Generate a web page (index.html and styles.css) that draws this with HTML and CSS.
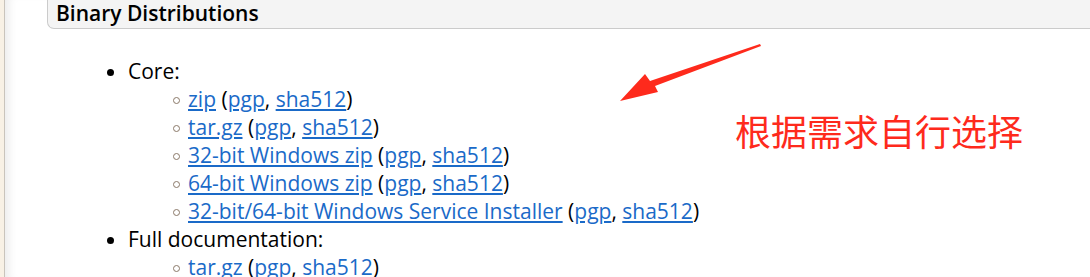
FILE: index.html
```html
<!DOCTYPE html>
<html lang="zh-CN">
  <head>
    <meta charset="UTF-8" />
    <title>Binary Distributions</title>
    <link rel="stylesheet" href="styles.css">
  </head>
  <body>
    <div class="page">
      <div class="side"></div>
      <div class="main">
        <h3 class="section-title">Binary Distributions</h3>
        <ul class="dist">
          <li>Core:
            <ul>
              <li><a href="#">zip</a> (<a href="#">pgp</a>, <a href="#">sha512</a>)</li>
              <li><a href="#">tar.gz</a> (<a href="#">pgp</a>, <a href="#">sha512</a>)</li>
              <li><a href="#">32-bit Windows zip</a> (<a href="#">pgp</a>, <a href="#">sha512</a>)</li>
              <li><a href="#">64-bit Windows zip</a> (<a href="#">pgp</a>, <a href="#">sha512</a>)</li>
              <li><a href="#">32-bit/64-bit Windows Service Installer</a> (<a href="#">pgp</a>, <a href="#">sha512</a>)</li>
            </ul>
          </li>
          <li>Full documentation:
            <ul>
              <li><a href="#">tar.gz</a> (<a href="#">pgp</a>, <a href="#">sha512</a>)</li>
            </ul>
          </li>
        </ul>

        <!-- screenshot annotation -->
        <svg class="arrow" width="160" height="70" viewBox="0 0 160 70">
          <path d="M143 14 L37 54 L40 60 L2 69 L27 42 L32 49 L142 12 Z" fill="#fe2a1c" />
        </svg>
        <div class="note">根据需求自行选择</div>
      </div>
    </div>
  </body>
</html>
```

FILE: styles.css
```css
body {
  margin: 0;
  background: #fff;
  font-family: "Open Sans", "Liberation Sans", sans-serif;
  color: #000;
  overflow: hidden;
}

.page {
  display: flex;
  height: 277px;
}

.side {
  width: 4px;
  background: #f8f1e5;
  border-right: 1px solid #c9c4bc;
}

.main {
  position: relative;
  flex: 1;
  box-shadow: inset 10px 0 8px -6px rgba(0, 0, 0, 0.08);
}

.section-title {
  margin: -10px 0 0 42px;
  padding: 8px 8px 1px;
  font-size: 21px;
  font-weight: 600;
  line-height: 28px;
  background: #f4f4f4;
  border: 1px solid #cbcbcb;
  border-right: none;
  border-radius: 0 0 0 7px;
}

.dist {
  margin: 28px 0 0 0;
  padding-left: 123px;
  font-size: 21px;
  line-height: 28px;
}

.dist ul {
  padding-left: 60px;
  margin: 0;
  list-style: none;
}

.dist ul li::before {
  content: "";
  display: inline-block;
  width: 5px;
  height: 5px;
  margin: 0 8px 0 -15px;
  border: 1px solid #8a7868;
  border-radius: 50%;
  vertical-align: middle;
  position: relative;
  top: -1px;
}

.dist a {
  color: #1a6ac8;
  text-decoration: underline;
}

.arrow {
  position: absolute;
  left: 613px;
  top: 32px;
}

.note {
  position: absolute;
  left: 730px;
  top: 106px;
  font-family: "Noto Sans CJK SC", sans-serif;
  font-size: 36px;
  line-height: 48px;
  color: #fe2a1c;
}
```
